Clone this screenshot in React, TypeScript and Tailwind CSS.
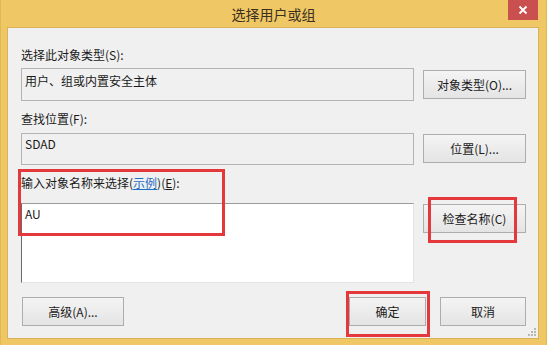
import React from "react";

const font = { fontFamily: '"Noto Sans CJK SC", "Noto Sans", sans-serif' };

function Btn({ children, className = "" }: { children: React.ReactNode; className?: string }) {
  return (
    <div
      className={
        "h-[29px] flex items-center justify-center border border-[#adadad] bg-gradient-to-b from-[#f4f4f4] to-[#e4e4e4] text-[12px] text-[#1a1a1a] " +
        className
      }
    >
      {children}
    </div>
  );
}

function Grip() {
  const dots = [
    [6, 0],
    [3, 3],
    [6, 3],
    [0, 6],
    [3, 6],
    [6, 6],
  ];
  return (
    <svg className="absolute right-[1px] bottom-[1px]" width="9" height="9" viewBox="0 0 9 9">
      {dots.map(([x, y], i) => (
        <rect key={i} x={x} y={y} width="2" height="2" fill="#b8b8b8" />
      ))}
    </svg>
  );
}

export default function App() {
  return (
    <div className="relative w-[547px] h-[345px] bg-[#efc765] flex flex-col border-x border-[#e2b852]" style={font}>
      {/* title bar */}
      <div className="relative h-[27px] flex items-center justify-center">
        <span className="text-[14px] text-[#3a3020] mt-[1px]">选择用户或组</span>
        <div className="absolute right-[8px] top-0 w-[30px] h-[20px] bg-[#c9504f] flex items-center justify-center">
          <svg width="10" height="10" viewBox="0 0 10 10">
            <path d="M1.5 1.5 L8.5 8.5 M8.5 1.5 L1.5 8.5" stroke="#ffffff" strokeWidth="1.8" />
          </svg>
        </div>
      </div>

      {/* client */}
      <div className="relative ml-[6px] mr-[7px] h-[312px] border border-[#d9b35a] bg-[#f0f0f0] pl-[13px] pr-[12px] text-[12px] text-[#1a1a1a]">
        <div className="mt-[17px] h-[20px] flex items-center">选择此对象类型(S):</div>
        <div className="mt-[3px] flex gap-[9px]">
          <div className="w-[393px] h-[33px] border border-[#b4b4b4] bg-[#f0f0f0] px-[3px] pt-[4px] leading-[16px]">
            用户、组或内置安全主体
          </div>
          <Btn className="mt-[2px] w-[103px]">对象类型(O)...</Btn>
        </div>

        <div className="mt-[8px] h-[20px] flex items-center">查找位置(F):</div>
        <div className="mt-[4px] flex gap-[9px]">
          <div className="w-[393px] h-[32px] border border-[#b4b4b4] bg-[#f0f0f0] px-[3px] pt-[2px] leading-[16px]">
            SDAD
          </div>
          <Btn className="mt-[1px] w-[103px]">位置(L)...</Btn>
        </div>

        <div className="mt-[8px] h-[20px] flex items-center">
          输入对象名称来选择(<span className="text-[#1c6ec6] underline">示例</span>)(<span className="underline">E</span>):
        </div>
        <div className="mt-[10px] flex gap-[9px]">
          <div className="w-[393px] h-[80px] border-t border-l border-t-[#9a9a9a] border-l-[#6a6a6a] border-r border-b border-r-[#e3e3e3] border-b-[#e3e3e3] bg-white px-[3px] pt-[2px] leading-[16px]">
            AU
          </div>
          <Btn className="mt-[1px] w-[103px]">检查名称(C)</Btn>
        </div>

        <div className="mt-[14px] flex items-center">
          <Btn className="ml-[1px] w-[102px]">高级(A)...</Btn>
          <div className="flex-1" />
          <Btn className="w-[77px] border-[#3b86c6]">确定</Btn>
          <Btn className="ml-[14px] w-[86px]">取消</Btn>
        </div>
        <Grip />
      </div>

      {/* annotation boxes */}
      <div className="absolute left-[17px] top-[169px] w-[207px] h-[67px] border-[3px] border-[#e5383d]" />
      <div className="absolute left-[427px] top-[197px] w-[89px] h-[46px] border-[3px] border-[#e5383d]" />
      <div className="absolute left-[345px] top-[291px] w-[84px] h-[46px] border-[3px] border-[#e5383d]" />
    </div>
  );
}
